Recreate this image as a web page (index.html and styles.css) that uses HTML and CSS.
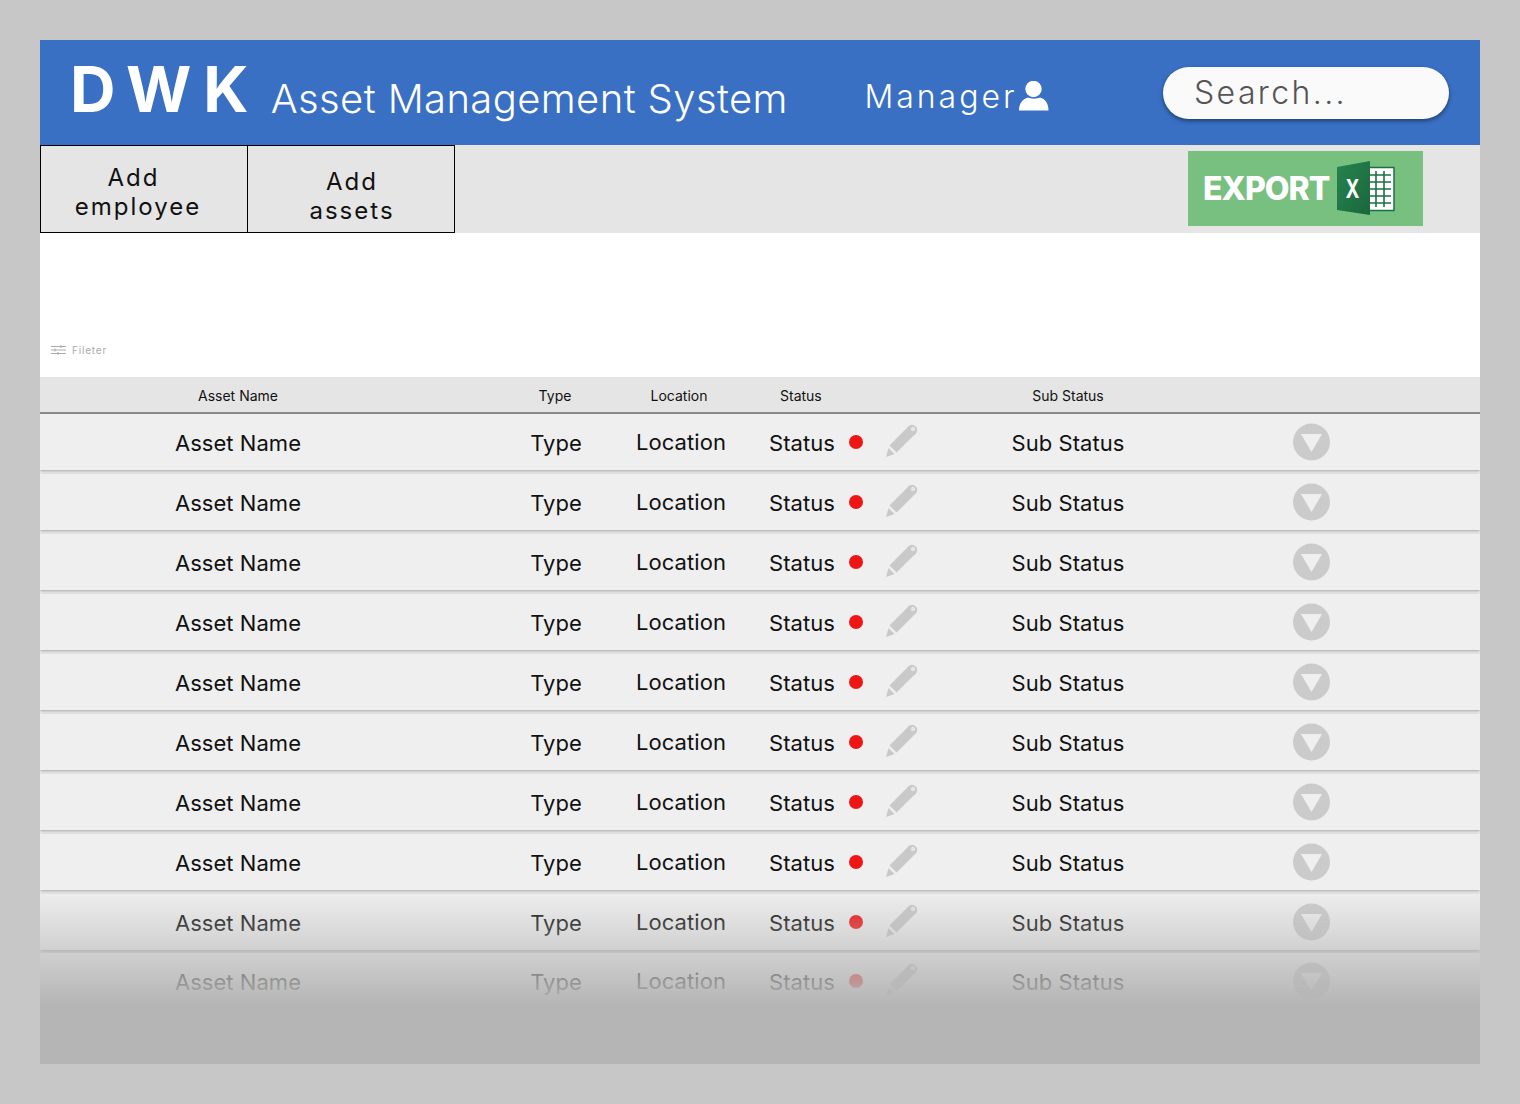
FILE: index.html
```html
<!DOCTYPE html>
<html lang="en">
<head>
    <meta charset="UTF-8">
    <title>DWK Asset Management System</title>
    <link rel="stylesheet" href="styles.css">
</head>
<body>
    <svg class="defs" width="0" height="0">
        <defs>
            <linearGradient id="bookGreen" x1="0" y1="0" x2="1" y2="1">
                <stop offset="0" stop-color="#26834f"/>
                <stop offset="1" stop-color="#1a673d"/>
            </linearGradient>
        </defs>
        <symbol id="pencil" viewBox="0 0 32 34">
            <path d="M0 33 L2.5 24 L8.5 30 Z" fill="#c9c9c9"/>
            <path d="M7 25 L26 6" stroke="#c9c9c9" stroke-width="10" fill="none"/>
            <circle cx="26" cy="6" r="5.2" fill="#c9c9c9"/>
            <circle cx="27" cy="5" r="2.2" fill="#e6e6e6"/>
        </symbol>
        <symbol id="arrow" viewBox="0 0 37 38">
            <circle cx="18.5" cy="19" r="18.5" fill="#cbcbcb"/>
            <path d="M8 11 H29 L18.5 29 Z" fill="#efefef"/>
        </symbol>
    </svg>

    <div class="app">
        <header class="topbar">
            <div class="logo">DWK</div>
            <div class="app-title">Asset Management System</div>
            <div class="user">
                <span>Manager</span>
                <svg width="30" height="30" viewBox="0 0 30 30">
                    <circle cx="14.5" cy="8" r="8.2" fill="#fff"/>
                    <path d="M0 29.5 C0 22 4 18 9 16.5 C12 18 18 18 21 16.5 C26 18 29.5 22 29.5 29.5 Z" fill="#fff"/>
                </svg>
            </div>
            <div class="search">Search...</div>
        </header>

        <div class="toolbar">
            <button class="tool-btn"><span class="add-word">Add</span><br>employee</button>
            <button class="tool-btn tool-btn-low">Add<br>assets</button>
            <div class="export">
                <span class="export-label">EXPORT</span>
                <svg width="58" height="55" viewBox="0 0 58 55">
                    <rect x="30" y="6.5" width="27" height="43" fill="#fff" stroke="#1d7044" stroke-width="1.5"/>
                    <path d="M33 14 H54 M33 21 H54 M33 28 H54 M33 35 H54 M33 42 H54 M39 10 V46 M47 10 V46" stroke="#1d7044" stroke-width="1.6"/>
                    <path d="M0 6 L33 0 V54 L0 49 Z" fill="url(#bookGreen)"/>
                    <text x="15.5" y="37" class="excel-x" textLength="14" lengthAdjust="spacingAndGlyphs">X</text>
                </svg>
            </div>
        </div>

        <div class="filter-area">
            <svg width="15" height="10" viewBox="0 0 15 10">
                <path d="M0 1.5 H15 M0 5 H15 M0 8.5 H15 M10 0 V3 M4 3.5 V6.5 M7 7 V10" stroke="#aaa" fill="none"/>
            </svg>
            <span>Fileter</span>
        </div>

        <div class="table">
            <div class="table-head">
                <div class="col-name">Asset Name</div>
                <div class="col-type">Type</div>
                <div class="col-location">Location</div>
                <div class="col-status">Status</div>
                <div class="col-sub">Sub Status</div>
                <div></div>
            </div>

            <div class="row">
                <div class="col-name">Asset Name</div><div class="col-type">Type</div><div class="col-location">Location</div>
                <div class="col-status"><span>Status</span><i class="dot"></i><svg class="edit"><use href="#pencil"/></svg></div>
                <div class="col-sub">Sub Status</div><div class="col-arrow"><svg class="expand"><use href="#arrow"/></svg></div>
            </div>
            <div class="row">
                <div class="col-name">Asset Name</div><div class="col-type">Type</div><div class="col-location">Location</div>
                <div class="col-status"><span>Status</span><i class="dot"></i><svg class="edit"><use href="#pencil"/></svg></div>
                <div class="col-sub">Sub Status</div><div class="col-arrow"><svg class="expand"><use href="#arrow"/></svg></div>
            </div>
            <div class="row">
                <div class="col-name">Asset Name</div><div class="col-type">Type</div><div class="col-location">Location</div>
                <div class="col-status"><span>Status</span><i class="dot"></i><svg class="edit"><use href="#pencil"/></svg></div>
                <div class="col-sub">Sub Status</div><div class="col-arrow"><svg class="expand"><use href="#arrow"/></svg></div>
            </div>
            <div class="row">
                <div class="col-name">Asset Name</div><div class="col-type">Type</div><div class="col-location">Location</div>
                <div class="col-status"><span>Status</span><i class="dot"></i><svg class="edit"><use href="#pencil"/></svg></div>
                <div class="col-sub">Sub Status</div><div class="col-arrow"><svg class="expand"><use href="#arrow"/></svg></div>
            </div>
            <div class="row">
                <div class="col-name">Asset Name</div><div class="col-type">Type</div><div class="col-location">Location</div>
                <div class="col-status"><span>Status</span><i class="dot"></i><svg class="edit"><use href="#pencil"/></svg></div>
                <div class="col-sub">Sub Status</div><div class="col-arrow"><svg class="expand"><use href="#arrow"/></svg></div>
            </div>
            <div class="row">
                <div class="col-name">Asset Name</div><div class="col-type">Type</div><div class="col-location">Location</div>
                <div class="col-status"><span>Status</span><i class="dot"></i><svg class="edit"><use href="#pencil"/></svg></div>
                <div class="col-sub">Sub Status</div><div class="col-arrow"><svg class="expand"><use href="#arrow"/></svg></div>
            </div>
            <div class="row">
                <div class="col-name">Asset Name</div><div class="col-type">Type</div><div class="col-location">Location</div>
                <div class="col-status"><span>Status</span><i class="dot"></i><svg class="edit"><use href="#pencil"/></svg></div>
                <div class="col-sub">Sub Status</div><div class="col-arrow"><svg class="expand"><use href="#arrow"/></svg></div>
            </div>
            <div class="row">
                <div class="col-name">Asset Name</div><div class="col-type">Type</div><div class="col-location">Location</div>
                <div class="col-status"><span>Status</span><i class="dot"></i><svg class="edit"><use href="#pencil"/></svg></div>
                <div class="col-sub">Sub Status</div><div class="col-arrow"><svg class="expand"><use href="#arrow"/></svg></div>
            </div>
            <div class="row">
                <div class="col-name">Asset Name</div><div class="col-type">Type</div><div class="col-location">Location</div>
                <div class="col-status"><span>Status</span><i class="dot"></i><svg class="edit"><use href="#pencil"/></svg></div>
                <div class="col-sub">Sub Status</div><div class="col-arrow"><svg class="expand"><use href="#arrow"/></svg></div>
            </div>
            <div class="row row-last">
                <div class="col-name">Asset Name</div><div class="col-type">Type</div><div class="col-location">Location</div>
                <div class="col-status"><span>Status</span><i class="dot"></i><svg class="edit"><use href="#pencil"/></svg></div>
                <div class="col-sub">Sub Status</div><div class="col-arrow"><svg class="expand"><use href="#arrow"/></svg></div>
            </div>
        </div>

        <div class="fade"></div>
    </div>
</body>
</html>
```

FILE: styles.css
```css
* {
    box-sizing: border-box;
}
body {
    margin: 0;
    padding: 40px;
    background-color: #c7c7c7;
    font-family: Inter, "Liberation Sans", sans-serif;
    color: #111;
}
.defs {
    position: absolute;
}
.app {
    position: relative;
    height: 1024px;
    overflow: hidden;
    background-color: #b5b5b5;
}

/* Шапка */
.topbar {
    display: flex;
    align-items: center;
    height: 105px;
    padding: 0 31px 0 30px;
    background-color: #3970c4;
    color: white;
}
.logo {
    font-size: 63px;
    font-weight: 700;
    letter-spacing: 12px;
    line-height: 1;
    margin-bottom: 7px;
}
.app-title {
    margin-left: 10px;
    margin-top: 12px;
    font-size: 40px;
    letter-spacing: 0.4px;
    font-weight: 300;
}
.user {
    display: flex;
    align-items: center;
    margin-left: 76.5px;
    margin-top: 7px;
    font-size: 32px;
    font-weight: 300;
    letter-spacing: 3px;
}
.user svg {
    margin-left: 1px;
    margin-top: 0;
}
.search {
    margin-left: auto;
    width: 286px;
    height: 52px;
    margin-top: 1px;
    padding: 6px 0 0 31px;
    border-radius: 26px;
    background-color: #fafafa;
    box-shadow: 0 2px 4px rgba(0,0,0,0.45);
    color: #555;
    font-size: 32px;
    font-weight: 300;
    letter-spacing: 2.4px;
}

/* Кнопки */
.toolbar {
    display: flex;
    height: 88px;
    background-color: #e5e5e5;
}
.tool-btn {
    width: 208px;
    height: 88px;
    padding: 5px 12px 0 0;
    margin-right: -1px;
    border: 1px solid black;
    background: none;
    color: #111;
    font-family: inherit;
    font-size: 24px;
    line-height: 29px;
    letter-spacing: 2px;
}
.tool-btn-low {
    padding: 13px 0 0 2px;
}
.add-word {
    margin-right: 9px;
}
.export {
    display: flex;
    align-items: center;
    width: 235px;
    height: 75px;
    margin: 6px 57px 0 auto;
    padding-left: 15px;
    background-color: #78c07f;
}
.export-label {
    color: white;
    font-size: 32px;
    font-weight: 800;
    letter-spacing: -1px;
    margin-right: 8px;
}
.excel-x {
    fill: white;
    font-size: 25px;
    font-weight: 700;
    text-anchor: middle;
}

.filter-area {
    display: flex;
    align-items: flex-end;
    height: 144px;
    padding: 0 0 22px 11px;
    background-color: white;
    color: #aaa;
    font-size: 10px;
    letter-spacing: 0.8px;
}
.filter-area span {
    margin-left: 6px;
    line-height: 10px;
}

/* Таблица */
.table {
    background-color: #f2f2f2;
}
.table-head, .row {
    display: grid;
    grid-template-columns: 456px 120px 130px 200px 244px 1fr;
    align-items: center;
    text-align: center;
}
.table-head {
    height: 37px;
    padding-top: 2px;
    border-bottom: 2px solid #8e8e8e;
    background-color: #e5e5e5;
    font-size: 14px;
}
.table-head .col-type {
    padding-right: 2px;
}
.table-head .col-location {
    padding-right: 4px;
}
.table-head .col-status {
    padding-left: 34px;
    text-align: left;
}
.row {
    height: 56px;
    padding-top: 1px;
    margin-bottom: 4px;
    background-color: #efefef;
    box-shadow: 0 1px 3px rgba(0,0,0,0.35);
    font-size: 22px;
    letter-spacing: 0.05px;
}
.row-last {
    margin-top: -1px;
}
.col-name {
    padding-right: 60px;
}
.row .col-status {
    display: flex;
    align-items: center;
    padding-left: 23px;
    text-align: left;
}
.row .col-location {
    margin-top: -1px;
}
.dot {
    width: 14px;
    height: 14px;
    margin-left: 14.5px;
    border-radius: 50%;
    background-color: #f01515;
    margin-top: -2px;
}
.edit {
    width: 32px;
    height: 34px;
    margin-left: 22.5px;
    margin-top: -3px;
}
.col-arrow {
    display: flex;
    justify-content: center;
    padding-right: 46px;
}
.expand {
    width: 37px;
    height: 38px;
    margin-top: -2px;
    margin-left: -1px;
}

.fade {
    position: absolute;
    left: 0;
    right: 0;
    top: 850px;
    bottom: 0;
    background: linear-gradient(to bottom, rgba(181,181,181,0), rgba(181,181,181,0.8) 92px, #b5b5b5 115px);
}
```
